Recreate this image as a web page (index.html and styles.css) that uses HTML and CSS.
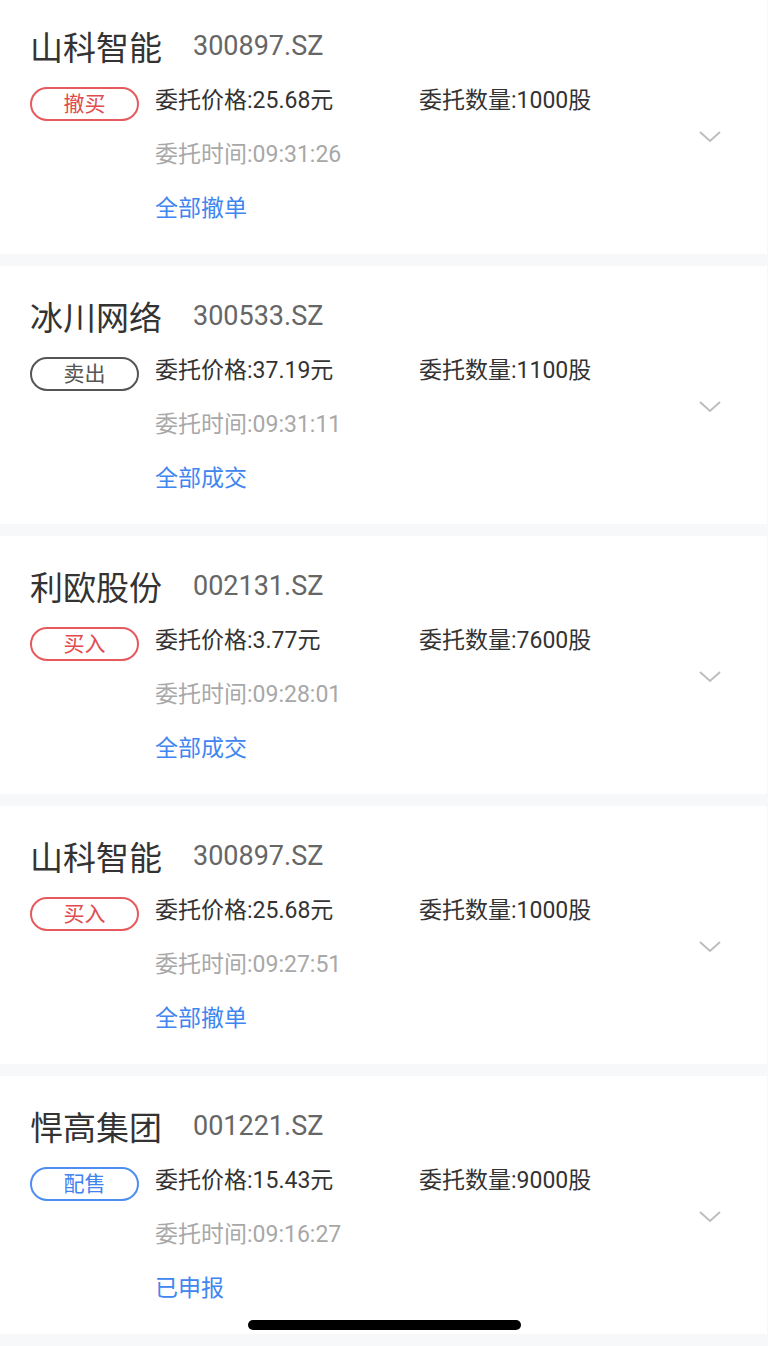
FILE: index.html
```html
<!DOCTYPE html>
<html lang="zh-CN">
<head>
    <meta charset="UTF-8">
    <meta name="viewport" content="width=device-width, initial-scale=1.0">
    <title>委托列表</title>
    <link rel="stylesheet" href="styles.css">
</head>
<body>
    <div class="lista">
        <div class="card">
            <div class="main">
                <div class="titulo"><span class="nome">山科智能</span><span class="codigo">300897.SZ</span></div>
                <div class="corpo">
                    <span class="tag vermelho">撤买</span>
                    <div class="info">
                        <span class="linha">委托价格:25.68元</span>
                        <span class="linha">委托数量:1000股</span>
                        <span class="linha tempo">委托时间:09:31:26</span>
                        <span class="linha"></span>
                        <span class="linha link">全部撤单</span>
                    </div>
                </div>
            </div>
            <svg class="seta" width="24" height="14" viewBox="0 0 24 14"><path d="M2 2 L12 11 L22 2" fill="none" stroke="#bdbdbd" stroke-width="2"/></svg>
        </div>

        <div class="card">
            <div class="main">
                <div class="titulo"><span class="nome">冰川网络</span><span class="codigo">300533.SZ</span></div>
                <div class="corpo">
                    <span class="tag cinza">卖出</span>
                    <div class="info">
                        <span class="linha">委托价格:37.19元</span>
                        <span class="linha">委托数量:1100股</span>
                        <span class="linha tempo">委托时间:09:31:11</span>
                        <span class="linha"></span>
                        <span class="linha link">全部成交</span>
                    </div>
                </div>
            </div>
            <svg class="seta" width="24" height="14" viewBox="0 0 24 14"><path d="M2 2 L12 11 L22 2" fill="none" stroke="#bdbdbd" stroke-width="2"/></svg>
        </div>

        <div class="card">
            <div class="main">
                <div class="titulo"><span class="nome">利欧股份</span><span class="codigo">002131.SZ</span></div>
                <div class="corpo">
                    <span class="tag vermelho">买入</span>
                    <div class="info">
                        <span class="linha">委托价格:3.77元</span>
                        <span class="linha">委托数量:7600股</span>
                        <span class="linha tempo">委托时间:09:28:01</span>
                        <span class="linha"></span>
                        <span class="linha link">全部成交</span>
                    </div>
                </div>
            </div>
            <svg class="seta" width="24" height="14" viewBox="0 0 24 14"><path d="M2 2 L12 11 L22 2" fill="none" stroke="#bdbdbd" stroke-width="2"/></svg>
        </div>

        <div class="card">
            <div class="main">
                <div class="titulo"><span class="nome">山科智能</span><span class="codigo">300897.SZ</span></div>
                <div class="corpo">
                    <span class="tag vermelho">买入</span>
                    <div class="info">
                        <span class="linha">委托价格:25.68元</span>
                        <span class="linha">委托数量:1000股</span>
                        <span class="linha tempo">委托时间:09:27:51</span>
                        <span class="linha"></span>
                        <span class="linha link">全部撤单</span>
                    </div>
                </div>
            </div>
            <svg class="seta" width="24" height="14" viewBox="0 0 24 14"><path d="M2 2 L12 11 L22 2" fill="none" stroke="#bdbdbd" stroke-width="2"/></svg>
        </div>

        <div class="card">
            <div class="main">
                <div class="titulo"><span class="nome">悍高集团</span><span class="codigo">001221.SZ</span></div>
                <div class="corpo">
                    <span class="tag azul">配售</span>
                    <div class="info">
                        <span class="linha">委托价格:15.43元</span>
                        <span class="linha">委托数量:9000股</span>
                        <span class="linha tempo">委托时间:09:16:27</span>
                        <span class="linha"></span>
                        <span class="linha link">已申报</span>
                    </div>
                </div>
            </div>
            <svg class="seta" width="24" height="14" viewBox="0 0 24 14"><path d="M2 2 L12 11 L22 2" fill="none" stroke="#bdbdbd" stroke-width="2"/></svg>
        </div>
    </div>

    <div class="home-bar"></div>
</body>
</html>
```

FILE: styles.css
```css
body {
    margin: 0;
    background-color: #f7f8fa;
    font-family: Roboto, "Noto Sans CJK SC", sans-serif;
    color: #333;
}
.lista {
    display: flex;
    flex-direction: column;
    gap: 12px;
    margin-top: -4px;
}
.card {
    display: flex;
    height: 258px;
    box-sizing: border-box;
    padding: 24px 0 19px 30px;
    margin-right: 1px;
    background-color: #fff;
}
.main {
    flex: 1;
}
.titulo {
    display: flex;
    align-items: center;
    height: 51px;
}
.nome {
    font-size: 33px;
    color: #333;
}
.codigo {
    margin-left: 31px;
    font-size: 27px;
    color: #666;
}
.corpo {
    display: flex;
}
.tag {
    width: 109px;
    height: 34px;
    box-sizing: border-box;
    margin-top: 16px;
    margin-right: 16px;
    border: 2px solid;
    border-radius: 17px;
    font-size: 21px;
    line-height: 30px;
    text-align: center;
}
.vermelho {
    color: #e14b50;
    border-color: #e8595d;
}
.cinza {
    color: #555;
    border-color: #555;
}
.azul {
    color: #3f82f0;
    border-color: #4d8ef3;
}
.info {
    display: grid;
    grid-template-columns: 264px auto;
    grid-auto-rows: 54px;
    align-items: center;
}
.linha {
    font-size: 23px;
    color: #333;
}
.tempo {
    color: #a8a8a8;
}
.link {
    color: #3f86f0;
}
.seta {
    align-self: center;
    margin-top: 18px;
    margin-right: 45px;
}
.home-bar {
    position: fixed;
    left: 248px;
    top: 1320px;
    width: 273px;
    height: 10px;
    border-radius: 5px;
    background-color: #000;
}
```
